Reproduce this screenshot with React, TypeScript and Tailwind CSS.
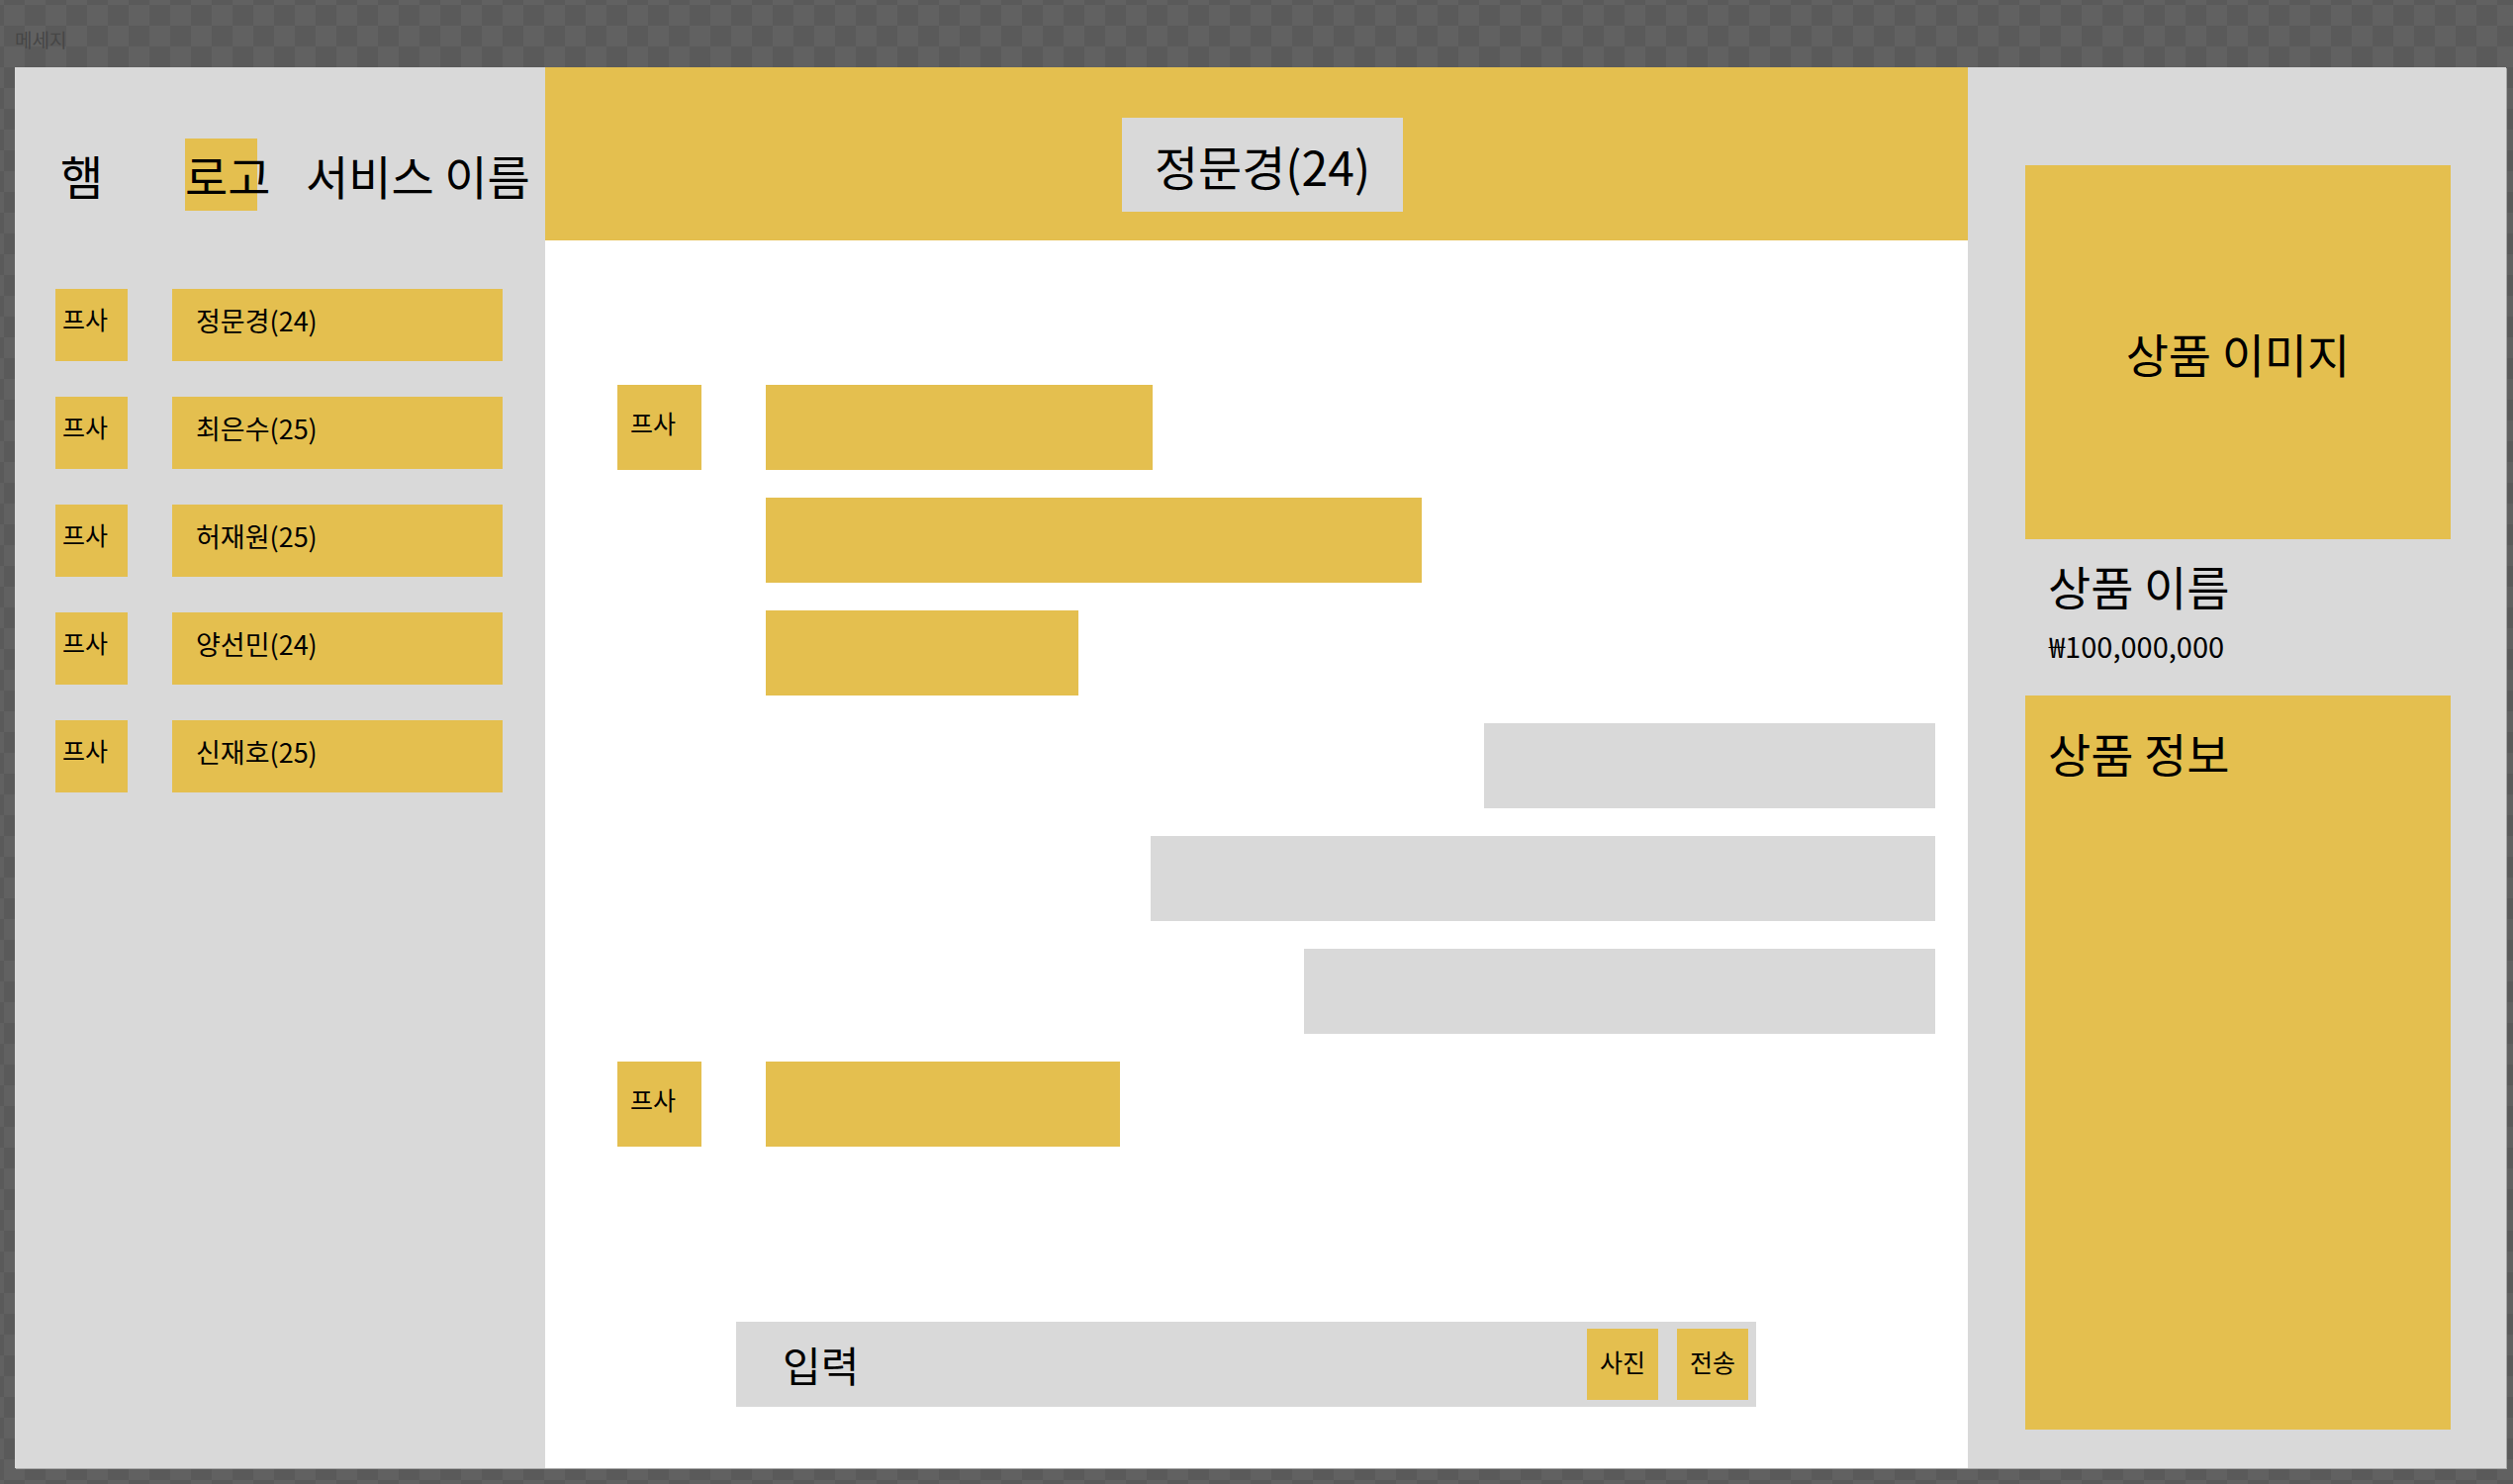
import React from 'react';

const incoming = [391, 663, 316];
const outgoing = [456, 793, 638];

const friends = ['정문경(24)', '최은수(25)', '허재원(25)', '양선민(24)', '신재호(25)'];

function Avatar() {
  return (
    <div className="h-[86px] w-[85px] shrink-0 bg-[#e4bf4f] pl-[13px] pt-[26px] text-[25px] leading-none">프사</div>
  );
}

export default function App() {
  return (
    <div className="min-h-screen w-full bg-[#5d5d5d] bg-[image:repeating-conic-gradient(#5a5a5a_0%_25%,#616161_0%_50%)] bg-[length:42px_42px] bg-[position:4px_5px] pl-[15px] pt-[28px] font-['Noto_Sans_CJK_KR','Noto_Sans',sans-serif] text-black">
      <div className="h-[40px] text-[19px] leading-[24px] text-[#464646]">메세지</div>

      <div className="flex h-[1416px] w-[2518px] shadow-[1px_1px_0_#a8a8a8]">
        {/* 친구 목록 */}
        <aside className="w-[536px] shrink-0 bg-[#d9d9d9] pl-[41px] pt-[72px]">
          <div className="flex h-[73px] items-center text-[47px] leading-none">
            <span className="ml-[5px] w-[126px]">햄</span>
            <div className="flex h-[73px] w-[73px] items-center whitespace-nowrap bg-[#e4bf4f]">로고</div>
            <span className="ml-[49px] whitespace-nowrap">서비스 이름</span>
          </div>

          <ul className="mt-[79px] flex flex-col gap-[36px]">
            {friends.map((name) => (
              <li key={name} className="flex gap-[45px]">
                <div className="h-[73px] w-[73px] bg-[#e4bf4f] pl-[7px] pt-[18px] text-[25px] leading-none">프사</div>
                <div className="h-[73px] w-[334px] bg-[#e4bf4f] pl-[24px] pt-[18px] text-[27px] leading-none">{name}</div>
              </li>
            ))}
          </ul>
        </aside>

        {/* 채팅 */}
        <main className="flex w-[1438px] shrink-0 flex-col bg-white">
          <header className="h-[175px] bg-[#e4bf4f] pl-[583px] pt-[51px]">
            <div className="flex h-[95px] w-[284px] items-center justify-center bg-[#d9d9d9] text-[48px] leading-none">
              정문경(24)
            </div>
          </header>

          <div className="flex flex-1 flex-col gap-[28px] pr-[33px] pt-[146px]">
            <div className="flex gap-[65px] pl-[73px]">
              <Avatar />
              <div className="flex flex-col gap-[28px]">
                {incoming.map((w) => (
                  <div key={w} className="h-[86px] bg-[#e4bf4f]" style={{ width: w }} />
                ))}
              </div>
            </div>

            <div className="flex flex-col items-end gap-[28px]">
              {outgoing.map((w) => (
                <div key={w} className="h-[86px] bg-[#d9d9d9]" style={{ width: w }} />
              ))}
            </div>

            <div className="flex gap-[65px] pl-[73px]">
              <Avatar />
              <div className="h-[86px] w-[358px] bg-[#e4bf4f]" />
            </div>
          </div>

          <div className="pb-[62px] pl-[193px]">
            <div className="flex h-[86px] w-[1031px] items-center bg-[#d9d9d9] pl-[47px] pr-[8px]">
              <span className="text-[42px] leading-none">입력</span>
              <div className="ml-auto flex gap-[19px] text-[25px] leading-none">
                <button type="button" className="flex h-[72px] w-[72px] items-center justify-center bg-[#e4bf4f] pb-[5px]">
                  사진
                </button>
                <button type="button" className="flex h-[72px] w-[72px] items-center justify-center bg-[#e4bf4f] pb-[5px]">
                  전송
                </button>
              </div>
            </div>
          </div>
        </main>

        {/* 상품 */}
        <aside className="flex-1 bg-[#d9d9d9] pl-[58px] pt-[99px]">
          <div className="flex h-[378px] w-[430px] items-center justify-center bg-[#e4bf4f] text-[47px] leading-none">
            상품 이미지
          </div>
          <div className="mt-[23px] pl-[23px] text-[47px] leading-none">상품 이름</div>
          <div className="mt-[23px] pl-[24px] text-[29px] leading-none">₩100,000,000</div>
          <div className="mt-[36px] h-[742px] w-[430px] bg-[#e4bf4f] pl-[23px] pt-[34px] text-[47px] leading-none">
            상품 정보
          </div>
        </aside>
      </div>
    </div>
  );
}
